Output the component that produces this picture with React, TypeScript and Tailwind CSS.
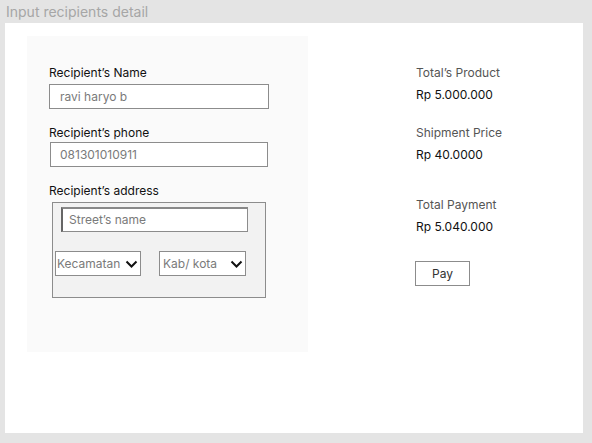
import React from "react"

function Chevron() {
  return (
    <svg width="13" height="8" viewBox="0 0 13 8" className="shrink-0">
      <polyline points="1.5,1.5 6.5,6.5 11.5,1.5" fill="none" stroke="#111" strokeWidth="2" />
    </svg>
  )
}

const field = "h-[25px] border border-[#8c8c8c] bg-white flex items-center text-[12px] text-[#7a7a7a]"

export default function App() {
  return (
    <div className="w-[592px] h-[443px] bg-[#e4e4e4] flex flex-col font-['Inter',sans-serif] overflow-hidden">
      <div className="h-[23px] pl-[6px] pt-[3px] text-[14px] leading-[18px] text-[#a6a6a6]">
        Input recipients detail
      </div>

      <div className="ml-[5px] w-[578px] h-[410px] bg-white flex">
        {/* form */}
        <div className="ml-[22px] mt-[13px] w-[281px] h-[316px] bg-[#fafafa] pl-[22px] pt-[29px] flex flex-col">
          <label className="text-[12px] leading-[16px] text-[#111]">Recipient’s Name</label>
          <div className={`${field} mt-[3px] w-[220px] pl-[10px]`}>ravi haryo b</div>

          <label className="mt-4 text-[12px] leading-[16px] text-[#111]">Recipient’s phone</label>
          <div className={`${field} mt-[1px] ml-[1px] w-[218px] pl-[9px] h-[24px]`}>081301010911</div>

          <label className="mt-4 text-[12px] leading-[16px] text-[#111]">Recipient’s address</label>
          <div className="mt-[3px] ml-[3px] w-[214px] h-[96px] border border-[#8c8c8c] bg-[#f2f2f2] flex flex-col">
            <div className={`${field} mt-[4px] ml-[8px] w-[187px] pl-[6px] border-l-2 border-t-2 border-l-[#666] border-t-[#888]`}>
              Street’s name
            </div>
            <div className="mt-[19px] ml-[2px] flex gap-[18px]">
              <div className={`${field} w-[86px] pl-[1px] pr-[2px] justify-between`}>
                <span>Kecamatan</span>
                <Chevron />
              </div>
              <div className={`${field} w-[87px] pl-[3px] pr-[2px] justify-between`}>
                <span>Kab/ kota</span>
                <Chevron />
              </div>
            </div>
          </div>
        </div>

        {/* summary */}
        <div className="ml-[108px] pt-[42px] flex flex-col text-[12px] leading-[16px]">
          <div className="text-[#555]">Total’s Product</div>
          <div className="mt-[6px] text-[#111]">Rp 5.000.000</div>

          <div className="mt-[22px] text-[#555]">Shipment Price</div>
          <div className="mt-[6px] text-[#111]">Rp 40.0000</div>

          <div className="mt-[34px] text-[#555]">Total Payment</div>
          <div className="mt-[6px] text-[#111]">Rp 5.040.000</div>

          <button className="mt-[26px] -ml-[1px] w-[55px] h-[25px] border border-[#8c8c8c] bg-white text-[12px] text-[#333]">
            Pay
          </button>
        </div>
      </div>
    </div>
  )
}
